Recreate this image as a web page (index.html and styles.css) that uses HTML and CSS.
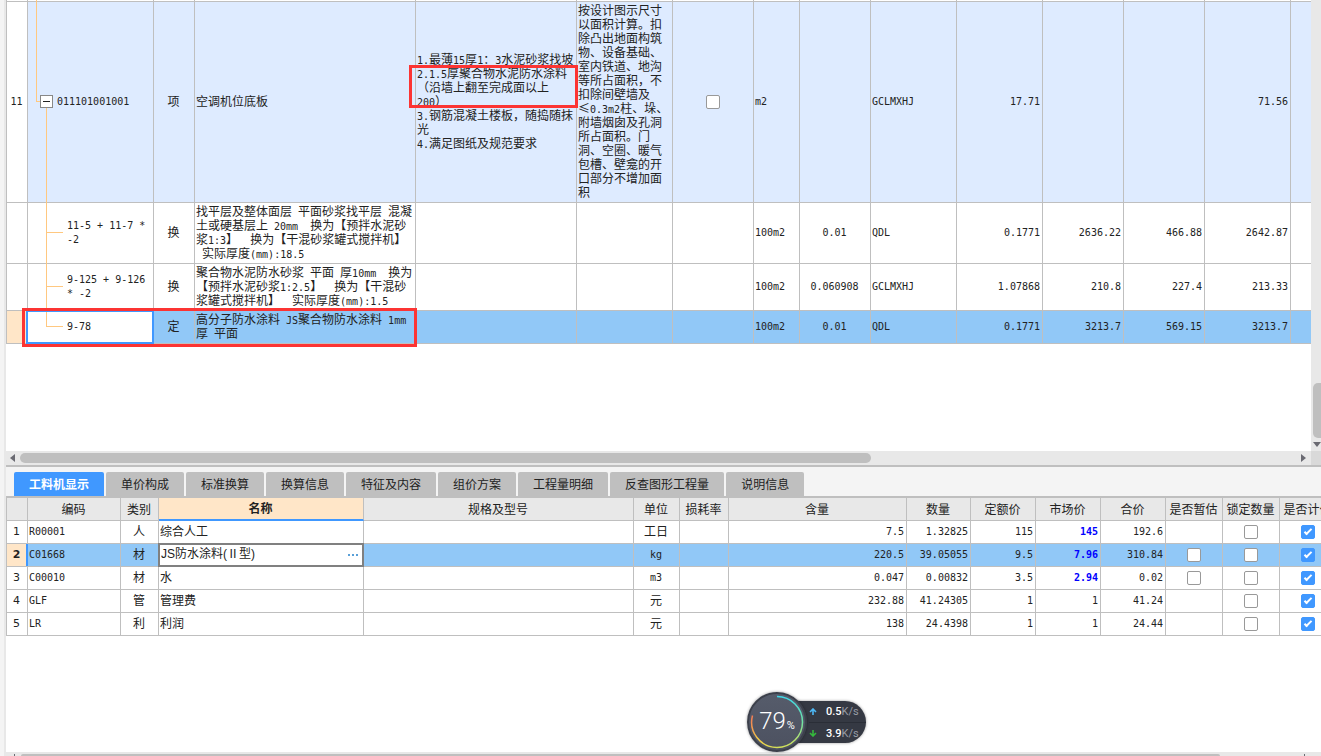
FILE: index.html
```
<!DOCTYPE html>
<html lang="zh-CN">
<head>
<meta charset="utf-8">
<title>工料机显示</title>
<link rel="stylesheet" href="styles.css">
</head>
<body>
<main class="app">
  <section class="upper">
    <div class="upper-body">
      <div class="sheet">
        <table class="grid items">
          <colgroup>
            <col class="w21"><col class="w126"><col class="w41"><col class="w221"><col class="w161"><col class="w96"><col class="w81"><col class="w46"><col class="w71"><col class="w86"><col class="w86"><col class="w81"><col class="w81"><col class="w86"><col>
          </colgroup>
          <tbody>
            <tr class="r-sliver"><td></td><td class="code"><span class="trunk outer"></span></td><td></td><td></td><td></td><td></td><td></td><td></td><td></td><td></td><td></td><td></td><td></td><td></td><td></td></tr>
            <tr class="r-main">
              <td class="idx">11</td>
              <td class="code parent"><span class="trunk outer half"></span><span class="twig"></span><button class="toggle" aria-label="折叠"></button><span class="trunk inner lower-half"></span>011101001001</td>
              <td class="mid">项</td>
              <td>空调机位底板</td>
              <td class="pre"><span class="m">1.</span>最薄<span class="m">15</span>厚<span class="m">1</span>：<span class="m">3</span>水泥砂浆找坡<br><span class="m">2.1.5</span>厚聚合物水泥防水涂料<br>（沿墙上翻至完成面以上<br><span class="m">200</span>）<br><span class="m">3.</span>钢筋混凝土楼板，随捣随抹<br>光<br><span class="m">4.</span>满足图纸及规范要求</td>
              <td class="pre">按设计图示尺寸<br>以面积计算。扣<br>除凸出地面构筑<br>物、设备基础、<br>室内铁道、地沟<br>等所占面积，不<br>扣除间壁墙及<br>≤<span class="m">0.3m2</span>柱、垛、<br>附墙烟囱及孔洞<br>所占面积。门<br>洞、空圈、暖气<br>包槽、壁龛的开<br>口部分不增加面<br>积</td>
              <td class="check"><input type="checkbox" aria-label="主要清单"></td>
              <td class="lat">m2</td>
              <td></td>
              <td class="lat">GCLMXHJ</td>
              <td class="num">17.71</td>
              <td></td>
              <td></td>
              <td class="num">71.56</td>
              <td></td>
            </tr>
            <tr class="r-4">
              <td></td>
              <td class="code"><span class="trunk inner"></span><span class="branch"></span>11-5 + 11-7 *<br>-2</td>
              <td class="mid">换</td>
              <td class="pre">找平层及整体面层<span class="m"> </span>平面砂浆找平层<span class="m"> </span>混凝<br>土或硬基层上<span class="m"> 20mm  </span>换为【预拌水泥砂<br>浆<span class="m">1:3</span>】<span class="m">  </span>换为【干混砂浆罐式搅拌机】<br><span class="m"> </span>实际厚度<span class="m">(mm):18.5</span></td>
              <td></td><td></td><td></td>
              <td class="lat">100m2</td>
              <td class="lat mid">0.01</td>
              <td class="lat">QDL</td>
              <td class="num">0.1771</td>
              <td class="num">2636.22</td>
              <td class="num">466.88</td>
              <td class="num">2642.87</td>
              <td></td>
            </tr>
            <tr class="r-3">
              <td></td>
              <td class="code"><span class="trunk inner"></span><span class="branch"></span>9-125 + 9-126<br>* -2</td>
              <td class="mid">换</td>
              <td class="pre">聚合物水泥防水砂浆<span class="m"> </span>平面<span class="m"> </span>厚<span class="m">10mm  </span>换为<br>【预拌水泥砂浆<span class="m">1:2.5</span>】<span class="m">  </span>换为【干混砂<br>浆罐式搅拌机】<span class="m">  </span>实际厚度<span class="m">(mm):1.5</span></td>
              <td></td><td></td><td></td>
              <td class="lat">100m2</td>
              <td class="lat mid">0.060908</td>
              <td class="lat">GCLMXHJ</td>
              <td class="num">1.07868</td>
              <td class="num">210.8</td>
              <td class="num">227.4</td>
              <td class="num">213.33</td>
              <td></td>
            </tr>
            <tr class="r-2 selected">
              <td class="current"></td>
              <td class="code active"><span class="trunk inner half"></span><span class="branch"></span>9-78</td>
              <td class="mid">定</td>
              <td class="pre">高分子防水涂料<span class="m"> JS</span>聚合物防水涂料<span class="m"> 1mm</span><br>厚<span class="m"> </span>平面</td>
              <td></td><td></td><td></td>
              <td class="lat">100m2</td>
              <td class="lat mid">0.01</td>
              <td class="lat">QDL</td>
              <td class="num">0.1771</td>
              <td class="num">3213.7</td>
              <td class="num">569.15</td>
              <td class="num">3213.7</td>
              <td></td>
            </tr>
          </tbody>
        </table>
        <div class="mark mark-spec"></div>
        <div class="mark mark-row"></div>
      </div>
      <div class="vbar"><span class="vthumb"></span><span class="arrow down"></span></div>
    </div>
    <div class="hbar">
      <span class="arrow left"></span>
      <span class="track"><span class="hthumb"></span></span>
      <span class="arrow right"></span>
      <span class="corner"></span>
    </div>
  </section>

  <section class="lower">
    <nav class="tabs">
      <button class="tab on">工料机显示</button>
      <button class="tab">单价构成</button>
      <button class="tab">标准换算</button>
      <button class="tab">换算信息</button>
      <button class="tab">特征及内容</button>
      <button class="tab">组价方案</button>
      <button class="tab">工程量明细</button>
      <button class="tab">反查图形工程量</button>
      <button class="tab">说明信息</button>
    </nav>
    <div class="detail">
      <table class="grid parts">
        <colgroup>
          <col class="w21"><col class="w93"><col class="w38"><col class="w205"><col class="w270"><col class="w46"><col class="w49"><col class="w178"><col class="w64"><col class="w65"><col class="w65"><col class="w65"><col class="w57"><col class="w57"><col class="w57">
        </colgroup>
        <thead>
          <tr><th></th><th>编码</th><th>类别</th><th class="sorted">名称</th><th>规格及型号</th><th>单位</th><th>损耗率</th><th>含量</th><th>数量</th><th>定额价</th><th>市场价</th><th>合价</th><th>是否暂估</th><th>锁定数量</th><th>是否计价</th></tr>
        </thead>
        <tbody>
          <tr><td class="rowno">1</td><td class="lat">R00001</td><td class="mid">人</td><td>综合人工</td><td></td><td class="mid">工日</td><td></td><td class="num">7.5</td><td class="num">1.32825</td><td class="num">115</td><td class="num price">145</td><td class="num">192.6</td><td></td><td class="check"><input type="checkbox" aria-label="锁定数量 1"></td><td class="check"><input type="checkbox" checked aria-label="是否计价 1"></td></tr>
          <tr class="selected"><td class="rowno current">2</td><td class="lat">C01668</td><td class="mid">材</td><td class="editing"><div class="editor"><input type="text" value="JS防水涂料(Ⅱ型)" aria-label="名称"><button class="more" aria-label="更多"><i></i><i></i><i></i></button></div></td><td></td><td class="lat mid">kg</td><td></td><td class="num">220.5</td><td class="num">39.05055</td><td class="num">9.5</td><td class="num price">7.96</td><td class="num">310.84</td><td class="check"><input type="checkbox" aria-label="是否暂估 2"></td><td class="check"><input type="checkbox" aria-label="锁定数量 2"></td><td class="check"><input type="checkbox" checked aria-label="是否计价 2"></td></tr>
          <tr><td class="rowno">3</td><td class="lat">C00010</td><td class="mid">材</td><td>水</td><td></td><td class="lat mid">m3</td><td></td><td class="num">0.047</td><td class="num">0.00832</td><td class="num">3.5</td><td class="num price">2.94</td><td class="num">0.02</td><td class="check"><input type="checkbox" aria-label="是否暂估 3"></td><td class="check"><input type="checkbox" aria-label="锁定数量 3"></td><td class="check"><input type="checkbox" checked aria-label="是否计价 3"></td></tr>
          <tr><td class="rowno">4</td><td class="lat">GLF</td><td class="mid">管</td><td>管理费</td><td></td><td class="mid">元</td><td></td><td class="num">232.88</td><td class="num">41.24305</td><td class="num">1</td><td class="num">1</td><td class="num">41.24</td><td></td><td class="check"><input type="checkbox" aria-label="锁定数量 4"></td><td class="check"><input type="checkbox" checked aria-label="是否计价 4"></td></tr>
          <tr><td class="rowno">5</td><td class="lat">LR</td><td class="mid">利</td><td>利润</td><td></td><td class="mid">元</td><td></td><td class="num">138</td><td class="num">24.4398</td><td class="num">1</td><td class="num">1</td><td class="num">24.44</td><td></td><td class="check"><input type="checkbox" aria-label="锁定数量 5"></td><td class="check"><input type="checkbox" checked aria-label="是否计价 5"></td></tr>
        </tbody>
      </table>
    </div>
    <div class="footbar"><span class="tick"></span><span class="track"><span class="footthumb"></span></span><span class="tick"></span></div>
  </section>
</main>

<aside class="meter">
  <div class="dial">
    <svg viewBox="0 0 60 60" aria-hidden="true">
      <defs>
        <linearGradient id="face" x1="0" y1="0" x2="0" y2="1"><stop offset="0" stop-color="#565c6b"/><stop offset="1" stop-color="#4c5160"/></linearGradient>
        <linearGradient id="arc-right" x1="0" y1="0" x2="0" y2="1"><stop offset="0" stop-color="#3fd8e8"/><stop offset=".5" stop-color="#6fe3a4"/><stop offset="1" stop-color="#d3df58"/></linearGradient>
        <linearGradient id="arc-left" x1="1" y1="1" x2="0" y2="0"><stop offset="0" stop-color="#d3df58"/><stop offset=".5" stop-color="#f1cb48"/><stop offset="1" stop-color="#f27a55"/></linearGradient>
      </defs>
      <circle cx="30" cy="30" r="29" fill="url(#face)" stroke="#3c404b" stroke-width="2"/>
      <path d="M30 4.500A25.500 25.500 0 0 1 30 55.500" fill="none" stroke="url(#arc-right)" stroke-width="1.500"/>
      <path d="M30 55.500A25.500 25.500 0 0 1 5.500 23.500" fill="none" stroke="url(#arc-left)" stroke-width="1.500"/>
    </svg>
    <div class="percent">79<small>%</small></div>
  </div>
  <div class="rates">
    <div class="rate"><svg viewBox="0 0 8 8" aria-hidden="true"><path d="M4 1v6M1 4l3-3 3 3" fill="none" stroke="#4db8f5" stroke-width="1.600"/></svg><b>0.5</b><span>K/s</span></div>
    <div class="rate"><svg viewBox="0 0 8 8" aria-hidden="true"><path d="M4 1v6M1 4l3 3 3-3" fill="none" stroke="#35b83c" stroke-width="1.600"/></svg><b>3.9</b><span>K/s</span></div>
  </div>
</aside>
</body>
</html>
```
FILE: styles.css
```
* { box-sizing: border-box; }

body {
  margin: 0;
  height: 100vh;
  overflow: hidden;
  background: #f4f4f4;
  color: #222;
  font: 12px/14px "Noto Sans CJK SC", sans-serif;
}

button, input { font: inherit; color: inherit; margin: 0; padding: 0; }

.app {
  display: flex;
  flex-direction: column;
  height: 100vh;
  margin-left: 4px;
  border-left: 2px solid #e8e8e8;
}

/* shared grid look */
.grid {
  table-layout: fixed;
  border-collapse: separate;
  border-spacing: 0;
  border-left: 1px solid #bfbfbf;
}
.grid td, .grid th {
  position: relative;
  padding: 0 2px 2px 1px;
  border-right: 1px solid #bfbfbf;
  border-bottom: 1px solid #bfbfbf;
  text-align: left;
  font-weight: normal;
  white-space: nowrap;
}
.grid .idx, .code, .lat, .num, .m {
  font-family: "DejaVu Sans Mono", monospace;
  font-size: 10px;
}
.grid .idx, .grid .code, .grid .lat, .grid .num, .grid .check, .grid .rowno { padding-bottom: 0; }
.grid .mid, .grid .idx { text-align: center; }
.grid .check { padding-left: 2px; }
.grid .num { text-align: right; }
.grid .pre { white-space: pre; }
.m { white-space: pre; line-height: 10px; }
.selected td { background: #91c8f7; }
.grid .current { background: #ffe6c8; }

.w21 { width: 21px; } .w38 { width: 38px; } .w41 { width: 41px; } .w46 { width: 46px; }
.w49 { width: 49px; } .w57 { width: 57px; } .w64 { width: 64px; } .w65 { width: 65px; }
.w71 { width: 71px; } .w81 { width: 81px; } .w86 { width: 86px; } .w93 { width: 93px; }
.w96 { width: 96px; } .w126 { width: 126px; } .w161 { width: 161px; } .w178 { width: 178px; }
.w205 { width: 205px; } .w221 { width: 221px; } .w270 { width: 270px; }

input[type="checkbox"] {
  appearance: none;
  display: block;
  position: relative;
  width: 14px;
  height: 14px;
  margin: 0 auto;
  border: 1px solid #999;
  border-radius: 2px;
  background: #fff;
}
input[type="checkbox"]:checked { background: #4098ff; border-color: #4098ff; }
input[type="checkbox"]:checked::after {
  content: "";
  position: absolute;
  left: 4px;
  top: 1px;
  width: 4px;
  height: 8px;
  border: solid #fff;
  border-width: 0 2px 2px 0;
  box-sizing: border-box;
  transform: rotate(45deg);
}

/* upper pane */
.upper { flex: 466 0 0; min-height: 0; display: flex; flex-direction: column; border-bottom: 2px solid #bfbfbf; }
.upper-body { flex: 1; min-height: 0; display: flex; }
.sheet { position: relative; flex: 1; overflow: hidden; background: #fff; }
.items { width: 100%; }
.items td:last-child { border-right: 0; }
.grid .r-sliver td { height: 2px; padding: 0; line-height: 0; }
.r-main td { height: 201px; background: #deebff; }
.r-main .idx { background: #fff; }
.r-4 td { height: 61px; }
.r-3 td { height: 47px; }
.r-2 td { height: 33px; }
.items .code { padding-left: 39px; }
.items .parent { padding-left: 29px; }
.items .active { background: #fff; }
.active::after { content: ""; position: absolute; inset: -1px -1px -1px -2px; border: 2px solid #4098ff; }

.trunk { position: absolute; top: 0; bottom: -1px; width: 1px; background: #ffc880; }
.trunk.outer { left: 8px; }
.trunk.inner { left: 18px; }
.trunk.half { bottom: 50%; }
.trunk.lower-half { top: 50%; }
.twig, .branch { position: absolute; top: 50%; height: 1px; margin-top: -1px; background: #ffc880; }
.twig { left: 8px; width: 6px; }
.branch { left: 18px; width: 17px; }
.toggle {
  position: absolute;
  z-index: 1;
  left: 12px;
  top: 50%;
  width: 13px;
  height: 13px;
  margin-top: -7px;
  border: 1px solid #888;
  background: linear-gradient(#222, #222) center / 7px 1px no-repeat #fff;
}

.mark { position: absolute; border: 3px solid #fc3433; }
.mark-spec { left: 403px; top: 65px; width: 169px; height: 43px; }
.mark-row { left: 16px; top: 308px; width: 395px; height: 39px; }

.vbar { display: flex; flex-direction: column; align-items: flex-end; justify-content: flex-end; gap: 4px; width: 10px; padding-bottom: 4px; background: #e8e8e8; overflow: hidden; }
.vthumb { width: 8px; height: 55px; border-radius: 5px 0 0 5px; background: #bfbfbf; }
.hbar { display: flex; align-items: center; height: 14px; background: #e8e8e8; }
.track { flex: 1; }
.hthumb { display: block; width: 851px; max-width: 90%; height: 10px; border-radius: 5px; background: #bfbfbf; }
.arrow { border: 4px solid transparent; }
.arrow.left { border-right: 5px solid #6a6a72; border-left: 0; margin: 0 5px 0 4px; }
.arrow.right { border-left: 5px solid #6a6a72; border-right: 0; margin: 0 5px; }
.arrow.down { border-top: 5px solid #6a6a72; border-bottom: 0; }
.corner { width: 10px; height: 14px; background: #d9d9d9; }

/* lower pane */
.lower { flex: 290 0 0; min-height: 0; display: flex; flex-direction: column; }
.tabs { display: flex; gap: 2px; padding: 5px 8px 0; }
.tab {
  height: 24px;
  padding: 0 15px;
  border: 0;
  border-radius: 2px 2px 0 0;
  background: #bfbfbf;
  white-space: nowrap;
}
.tab.on { background: #4098ff; color: #fff; font-weight: bold; }
.detail { flex: 1; min-height: 0; overflow: hidden; border-top: 2px solid #bfbfbf; background: #fff; }
.parts { width: 1331px; }
.parts th { height: 23px; padding-bottom: 0; text-align: center; background: #e8e8e8; }
.parts .sorted { background: #ffe6c8; border-bottom: 2px solid #4098ff; font-weight: bold; }
.parts td { height: 23px; }
.parts .rowno { text-align: center; font: 11px "DejaVu Sans", sans-serif; }
.parts .rowno.current { font-weight: bold; }
.rowno.current::after { content: ""; position: absolute; top: 0; bottom: 0; right: -1px; width: 2px; background: #4098ff; }
.parts .price { color: #00f; font-weight: bold; }
.editor {
  position: absolute;
  inset: -1px -1px -1px -1px;
  display: flex;
  align-items: center;
  border: 2px solid #808080;
  background: #fff;
}
.editor input { flex: 1; min-width: 0; border: 0; padding: 0 0 1px 1px; background: none; font-family: "Liberation Sans", "Noto Sans CJK SC", sans-serif; }
.more { display: flex; gap: 2px; padding: 0 4px; border: 0; background: none; }
.more i { width: 2px; height: 2px; background: #5aa0d8; }

.footbar { display: flex; justify-content: space-between; align-items: flex-start; height: 4px; padding: 2px 16px 0 8px; background: #e8e8e8; }
.footbar .track { padding: 0 7px 0 6px; }
.footthumb { display: block; width: 94%; height: 2px; border-radius: 2px 2px 0 0; background: #bfbfbf; }
.tick { width: 1px; height: 2px; background: #6a6a72; }

/* floating network meter */
.meter { position: absolute; left: 747px; bottom: 4px; display: flex; align-items: center; color: #fff; }
.dial { position: relative; z-index: 1; width: 60px; height: 60px; border-radius: 50%; box-shadow: 0 0 3px rgba(0, 0, 0, .4); }
.dial svg { display: block; }
.percent { position: absolute; inset: 0; display: flex; align-items: baseline; justify-content: center; font: 300 24px/58px Roboto, sans-serif; }
.percent small { margin-left: 1px; font-size: 11px; font-weight: 400; }
.rates {
  display: flex;
  flex-direction: column;
  width: 76px;
  margin-left: -17px;
  padding-left: 19px;
  border-radius: 0 21px 21px 0;
  background: #353943;
  box-shadow: 0 0 3px rgba(0, 0, 0, .4);
}
.rate { display: flex; align-items: center; height: 21px; font: 11px/21px Roboto, sans-serif; }
.rate + .rate { border-top: 1px solid #2a2e37; }
.rate svg { width: 8px; height: 8px; margin-right: 9px; }
.rate b { font-weight: 500; }
.rate span { color: #989ca6; }
```
